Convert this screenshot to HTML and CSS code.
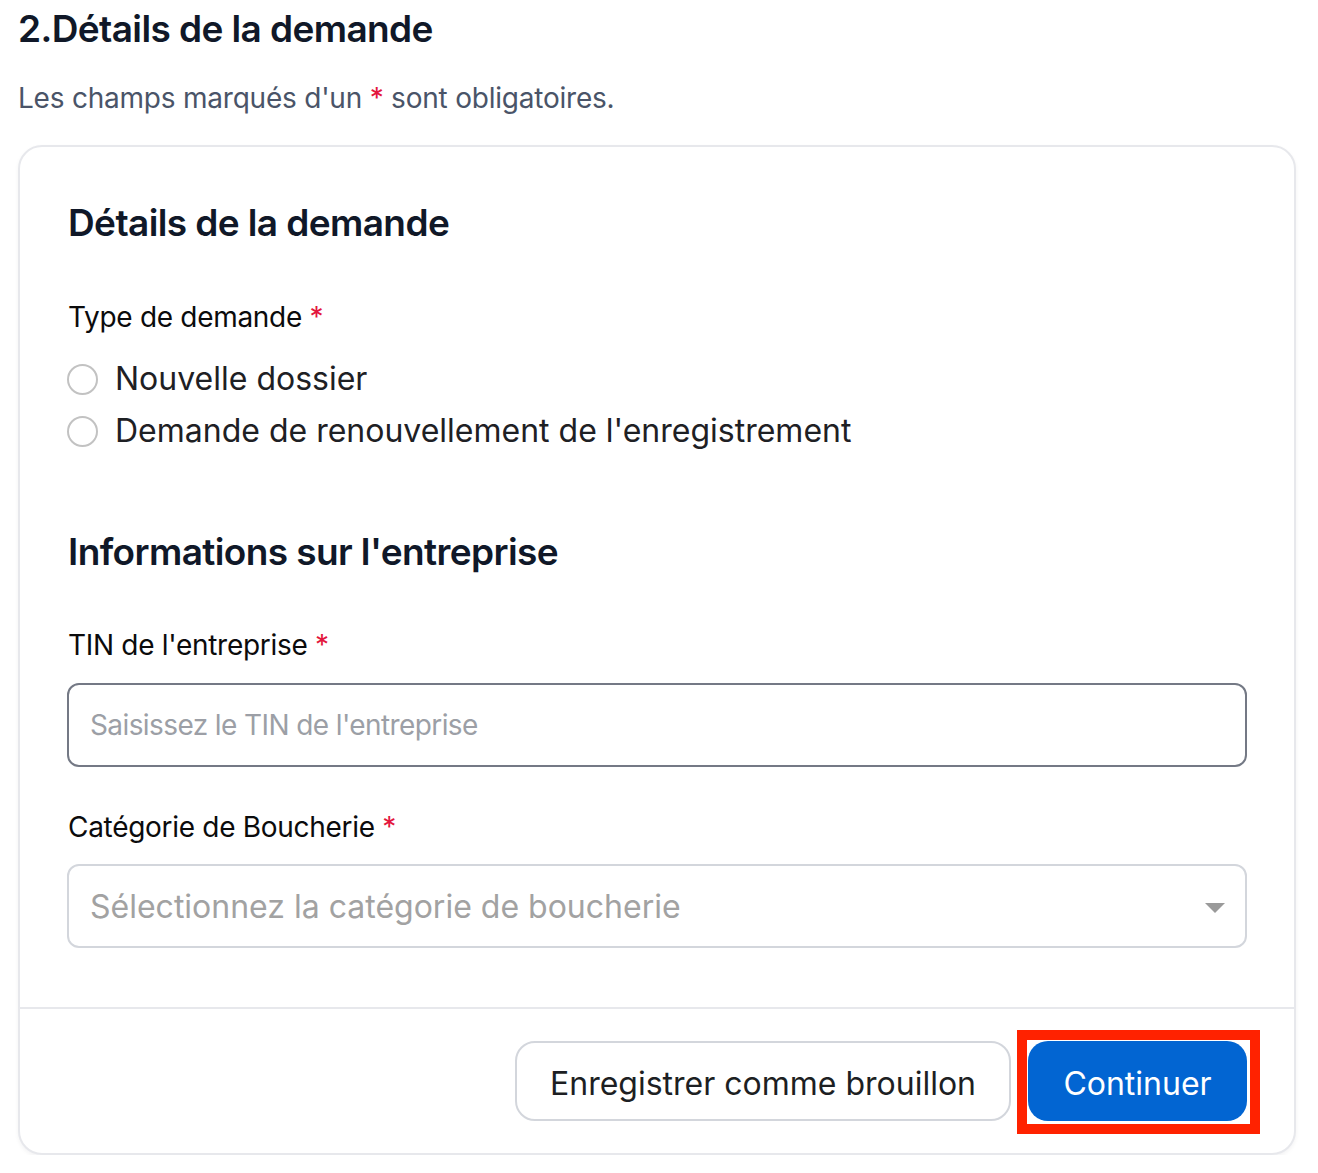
FILE: index.html
```html
<!DOCTYPE html>
<html lang="fr">
<head>
<meta charset="utf-8">
<title>Détails de la demande</title>
<link rel="stylesheet" href="styles.css">
</head>
<body>
<main class="page">
  <h1 class="page-title">2.Détails de la demande</h1>
  <p class="page-note">Les champs marqués d'un <span class="req">*</span> sont obligatoires.</p>

  <section class="card">
    <div class="card-body">
      <h2 class="section-title">Détails de la demande</h2>

      <div class="field field-radios">
        <div class="label">Type de demande <span class="req">*</span></div>
        <label class="radio-row"><input type="radio" name="type" class="radio"><span>Nouvelle dossier</span></label>
        <label class="radio-row"><input type="radio" name="type" class="radio"><span>Demande de renouvellement de l'enregistrement</span></label>
      </div>

      <h2 class="section-title section-title-2">Informations sur l'entreprise</h2>

      <div class="field field-tin">
        <div class="label">TIN de l'entreprise <span class="req">*</span></div>
        <input class="text-input" type="text" placeholder="Saisissez le TIN de l'entreprise">
      </div>

      <div class="field field-select">
        <div class="label">Catégorie de Boucherie <span class="req">*</span></div>
        <div class="select" role="combobox">
          <span class="select-placeholder">Sélectionnez la catégorie de boucherie</span>
          <svg class="caret" width="20" height="10" viewBox="0 0 20 10"><path d="M0 0 H20 L10 10 Z" fill="#9a9a9a"/></svg>
        </div>
      </div>
    </div>

    <div class="card-footer">
      <button class="btn btn-outline" type="button">Enregistrer comme brouillon</button>
      <span class="highlight">
        <button class="btn btn-primary" type="button">Continuer</button>
      </span>
    </div>
  </section>
</main>
</body>
</html>
```

FILE: styles.css
```css
* { box-sizing: border-box; }

html, body {
  margin: 0;
  padding: 0;
  background: #ffffff;
}

body {
  font-family: Inter, "Noto Sans", "DejaVu Sans", sans-serif;
  color: #101828;
}

.page {
  width: 1278px;
  margin-left: 18px;
  padding-top: 5px;
}

.page-title {
  margin: 0;
  font-size: 37px;
  line-height: 48px;
  font-weight: 600;
  letter-spacing: -0.6px;
  color: #101828;
}

.page-note {
  margin: 27px 0 0;
  font-size: 28px;
  line-height: 36px;
  color: #4a5468;
  letter-spacing: -0.22px;
}

.req {
  color: #e3163d;
}

.card {
  margin-top: 29px;
  border: 2px solid #e7e8ec;
  border-radius: 24px;
  box-shadow: 0 2px 4px rgba(16, 24, 40, 0.05);
  background: #fff;
}

.card-body {
  padding: 52px 48px 59px 48px;
}

.section-title {
  margin: 0;
  font-size: 37px;
  line-height: 48px;
  font-weight: 600;
  letter-spacing: -0.6px;
  color: #101828;
}

.section-title-2 {
  margin-top: 71px;
}

.field {
  margin-top: 60px;
  display: flex;
  flex-direction: column;
}

.field-tin {
  margin-top: 51px;
}

.field-radios {
  margin-top: 52px;
}

.field-select {
  margin-top: 42px;
}

.label {
  font-size: 28px;
  line-height: 36px;
  color: #0b0b0c;
  letter-spacing: -0.3px;
}

.field-radios .label {
  margin-bottom: 18px;
}

.radio-row {
  display: flex;
  align-items: center;
  gap: 17px;
  height: 52px;
  font-size: 32px;
  line-height: 52px;
  color: #1e2024;
  letter-spacing: 0;
}

.radio {
  appearance: none;
  -webkit-appearance: none;
  margin: 0 0 0 -1px;
  width: 31px;
  height: 31px;
  border: 2px solid #c2c2c2;
  border-radius: 50%;
  background: #fff;
  flex: none;
}

.text-input {
  margin-top: 20px;
  width: 1180px;
  height: 84px;
  margin-left: -1px;
  border: 2px solid #747985;
  border-radius: 12px;
  padding: 0 21px;
  font-family: inherit;
  font-size: 28px;
  color: #101828;
  letter-spacing: -0.6px;
  outline: none;
}

.text-input::placeholder {
  color: #9c9fa6;
}

.select {
  margin-top: 19px;
  margin-left: -1px;
  width: 1180px;
  height: 84px;
  border: 2px solid #d3d6dc;
  border-radius: 12px;
  padding: 0 20px 0 21px;
  display: flex;
  align-items: center;
  justify-content: space-between;
}

.select-placeholder {
  font-size: 32px;
  color: #a2a2a2;
  letter-spacing: 0;
}

.caret {
  flex: none;
  margin-top: 4px;
}

.card-footer {
  border-top: 2px solid #e7e8ec;
  padding: 32px 47px 32px;
  display: flex;
  justify-content: flex-end;
  align-items: center;
  gap: 17px;
}

.btn {
  height: 80px;
  border-radius: 20px;
  font-family: inherit;
  font-size: 32px;
  letter-spacing: 0;
  padding: 4px 33px 0;
  cursor: pointer;
}

.btn-outline {
  background: #fff;
  border: 2px solid #d3d6dc;
  color: #1d1f23;
}

.btn-primary {
  background: #0265d2;
  border: none;
  color: #fff;
  width: 219px;
  padding: 4px 0 0;
}

.highlight {
  position: relative;
  display: flex;
}

.highlight::after {
  content: "";
  position: absolute;
  left: -11px;
  top: -11px;
  right: -13px;
  bottom: -13px;
  border: 10px solid #ff2200;
  pointer-events: none;
}
```
